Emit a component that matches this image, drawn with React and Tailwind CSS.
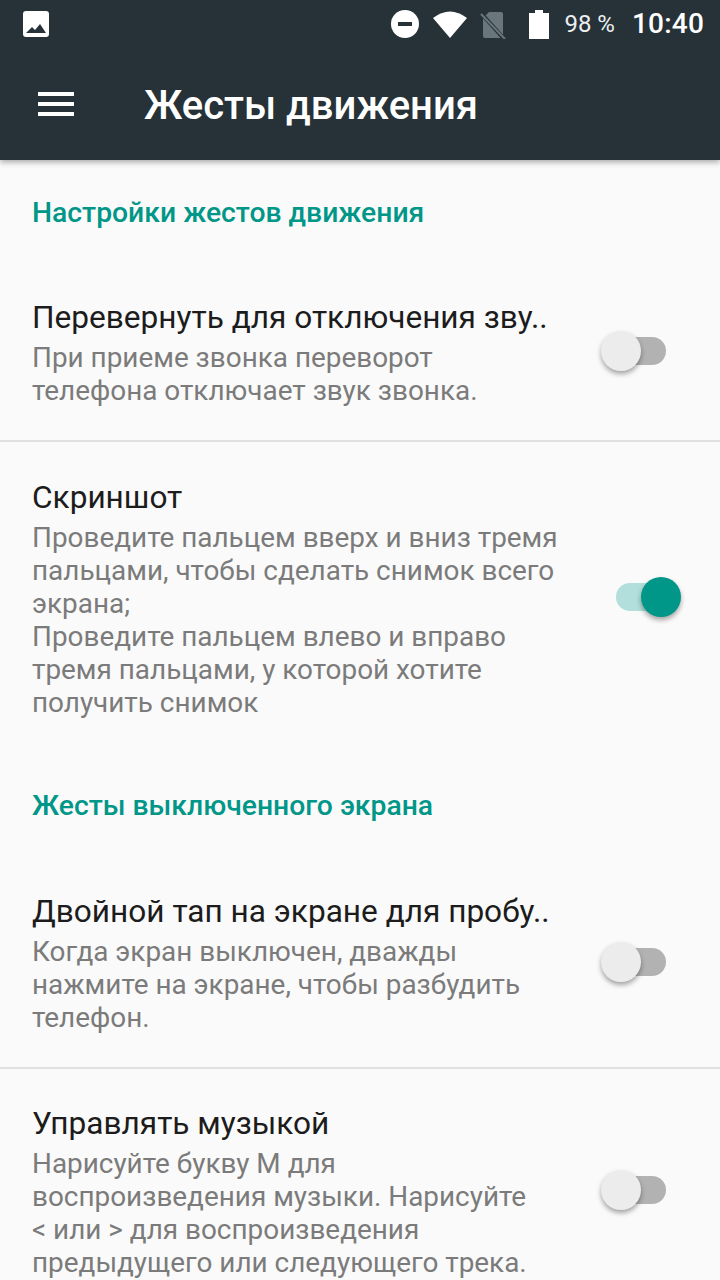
function StatusBar() {
  return (
    <div className="h-12 flex items-center pl-[23px] pr-4 text-white">
      <svg width="26" height="26" viewBox="0 0 26 26">
        <rect width="26" height="26" rx="3" fill="#fff" />
        <path d="M3 22 L9 16 L12 19 L17 13 L23 22 Z" fill="#263238" />
      </svg>
      <div className="flex-1" />
      <svg width="28" height="28" viewBox="0 0 28 28" className="mr-[14px]">
        <circle cx="14" cy="14" r="14" fill="#fff" />
        <rect x="7" y="12" width="14" height="4" fill="#263238" />
      </svg>
      <svg width="34" height="27" viewBox="0 0 34 27" className="mr-[13px]">
        <path d="M0 7 Q17 -6 34 7 L17 27 Z" fill="#fff" />
      </svg>
      <svg width="26" height="28" viewBox="0 0 26 28" className="mr-[23px] mt-[2px]">
        <path d="M9 1 H21 Q23 1 23 3 V25 Q23 27 21 27 H5 Q3 27 3 25 V7 Z" fill="#69777c" />
        <path d="M-1 0 L25 29" stroke="#263238" strokeWidth="4" />
        <path d="M1 3 L25 28" stroke="#69777c" strokeWidth="2" />
      </svg>
      <svg width="20" height="29" viewBox="0 0 20 29" className="mr-[15px]">
        <path d="M6 0 H14 V3 H20 V29 H0 V3 H6 Z" fill="#fff" />
      </svg>
      <span className="text-[24px] mr-[17px] text-[#eceff1]">98 %</span>
      <span className="text-[28px] font-medium tracking-[0.2px]">10:40</span>
    </div>
  );
}

function Toggle({ on }) {
  return (
    <div className="relative w-[80px] h-10 shrink-0 flex items-center justify-end pr-[30px]">
      <div className={`w-[50px] h-[28px] rounded-full ${on ? "bg-[#b2dfdb]" : "bg-[#b2b2b2]"}`} />
      <div
        className={`absolute top-0 w-10 h-10 rounded-full shadow-[0_3px_5px_rgba(0,0,0,0.35)] ${
          on ? "bg-[#009688] left-[25px]" : "bg-[#ececec] left-[-15px]"
        }`}
      />
    </div>
  );
}

function Section({ children }) {
  return (
    <div className="pl-8 text-[28.3px] leading-[32px] font-medium text-[#009688]">{children}</div>
  );
}

function Row({ title, lines, on, className = "" }) {
  return (
    <div className={`flex items-center pl-8 pr-[24px] ${className}`}>
      <div className="flex-1 min-w-0">
        <div className="text-[31.6px] leading-[46px] text-[#1c1c1c] whitespace-nowrap">{title}</div>
        <div className="text-[27.9px] leading-[33px] text-[#7b7b7b] whitespace-nowrap">
          {lines.map((l) => (
            <div key={l}>{l}</div>
          ))}
        </div>
      </div>
      <Toggle on={on} />
    </div>
  );
}

export default function App() {
  return (
    <div className="w-[720px] h-[1280px] overflow-hidden bg-[#fafafa] font-['Roboto',sans-serif]">
      <header className="relative z-10 bg-[#263238] h-[160px] shadow-[0_2px_6px_rgba(0,0,0,0.35)]">
        <StatusBar />
        <div className="flex items-center h-[112px] pl-[38px]">
          <div className="w-9 flex flex-col gap-[6px]">
            <div className="h-1 bg-white" />
            <div className="h-1 bg-white" />
            <div className="h-1 bg-white" />
          </div>
          <h1 className="ml-[70px] mt-[3px] text-[40px] font-medium text-white">Жесты движения</h1>
        </div>
      </header>

      <div className="pt-[37px]">
        <Section>Настройки жестов движения</Section>
        <Row
          className="pt-[66px] pb-[33px] border-b-2 border-[#e0e0e0]"
          title="Перевернуть для отключения зву.."
          lines={["При приеме звонка переворот", "телефона отключает звук звонка."]}
        />
        <Row
          className="pt-[33px]"
          on
          title="Скриншот"
          lines={[
            "Проведите пальцем вверх и вниз тремя",
            "пальцами, чтобы сделать снимок всего",
            "экрана;",
            "Проведите пальцем влево и вправо",
            "тремя пальцами, у которой хотите",
            "получить снимок",
          ]}
        />
        <Section>
          <div className="pt-[71px]">Жесты выключенного экрана</div>
        </Section>
        <Row
          className="pt-[67px] pb-[33px] border-b-2 border-[#e0e0e0]"
          title="Двойной тап на экране для пробу.."
          lines={["Когда экран выключен, дважды", "нажмите на экране, чтобы разбудить", "телефон."]}
        />
        <Row
          className="pt-[32px]"
          title="Управлять музыкой"
          lines={[
            "Нарисуйте букву М для",
            "воспроизведения музыки. Нарисуйте",
            "< или > для воспроизведения",
            "предыдущего или следующего трека.",
          ]}
        />
      </div>
    </div>
  );
}
